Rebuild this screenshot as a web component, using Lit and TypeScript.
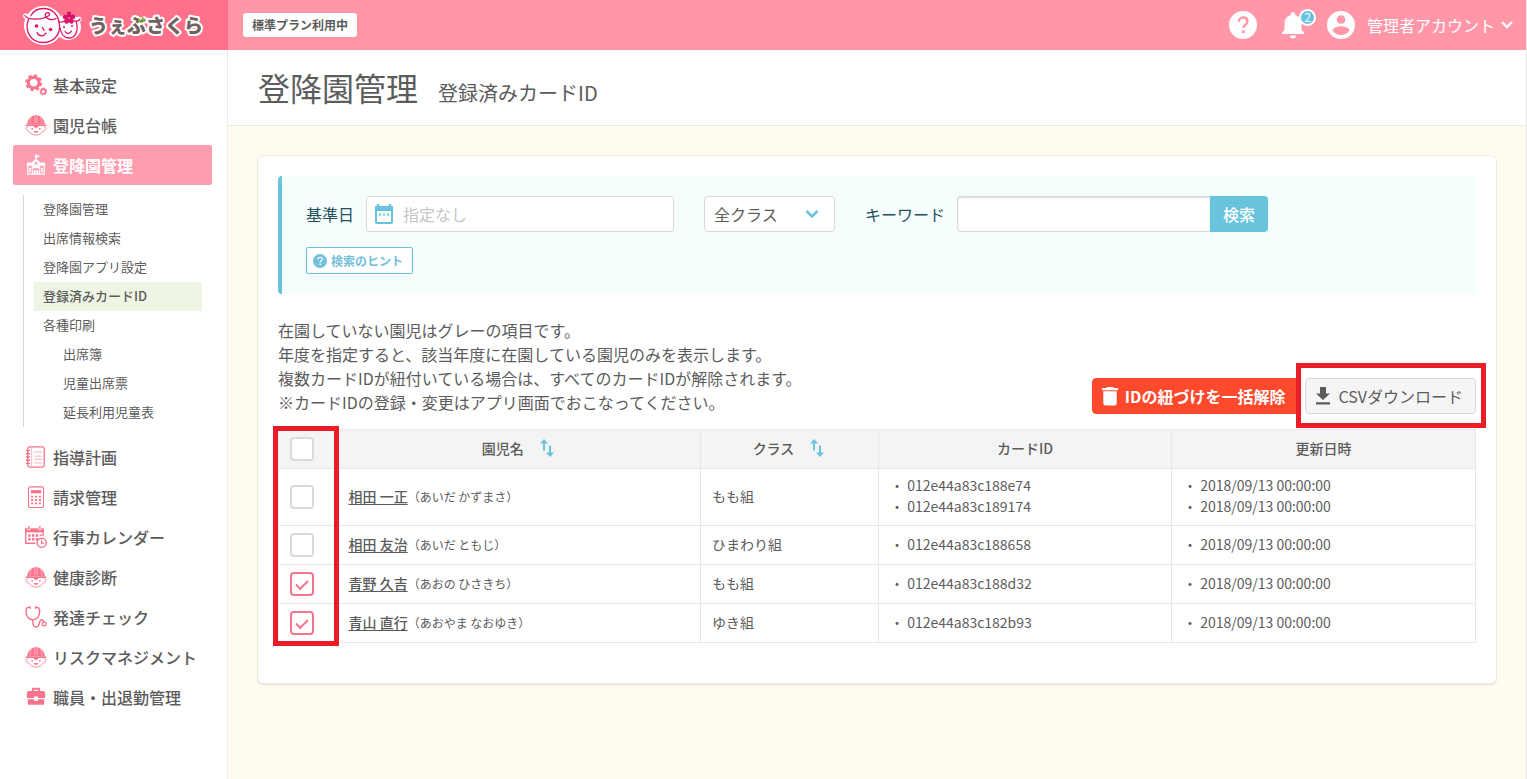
import { LitElement, html, svg, css, nothing } from "lit";
import { customElement, state } from "lit/decorators.js";
import { classMap } from "lit/directives/class-map.js";

const childIcon = svg`
  <path d="M2.300 11.500C2.500 6 6.500 1.300 12 1c5.500.3 9.500 5 9.700 10.500z" fill="currentColor"/>
  <path d="M1.300 12.200h21.400" stroke="currentColor" stroke-width="1.600" stroke-linecap="round"/>
  <path d="M10.800 1v9M13.200 1v9M7.500 3C5.800 5.500 5.500 8 5.500 10.500M16.500 3c1.700 2.500 2 5 2 7.500" fill="none" stroke="#fff" stroke-width=".5"/>
  <path d="M3.300 14C.4 13.600.6 18 3.800 18.200 5.500 21.300 8.500 23 12 23s6.500-1.700 8.200-4.800c3.200-.2 3.400-4.600.5-4.200" fill="none" stroke="currentColor" stroke-width=".9"/>
  <path d="M8.500 13h7L12 15.600z" fill="currentColor"/>
  <circle cx="7.800" cy="16.200" r="1" fill="currentColor"/><circle cx="16.200" cy="16.200" r="1" fill="currentColor"/>
  <path d="M9.500 18.500h5c-.3 2.700-4.700 2.700-5 0z" fill="currentColor"/>`;

const helpShape = svg`
  <circle cx="12" cy="12" r="12" fill="currentColor"/>
  <path d="M8.300 9.300c0-2.200 1.600-3.700 3.800-3.700s3.700 1.400 3.700 3.300c0 2.700-3.500 2.800-3.500 5.700" fill="none" stroke="var(--glyph)" stroke-width="2"/>
  <rect x="11.100" y="16.600" width="2.400" height="2.400" fill="var(--glyph)"/>`;

const icons = {
  gears: svg`
    <g fill="none" stroke="currentColor">
      <circle cx="9.500" cy="9.500" r="5.800" stroke-width="3.400"/>
      <circle cx="9.500" cy="9.500" r="8" stroke-width="2.400" stroke-dasharray="3.600 2.683"/>
      <circle cx="20" cy="19" r="2.500" stroke-width="1.700"/>
      <circle cx="20" cy="19" r="3.600" stroke-width="1.200" stroke-dasharray="1.500 1.327"/>
    </g>`,
  child: childIcon,
  school: svg`
    <path d="M11.600 .5v6M12 1l3.500 1.500L12 4z" fill="currentColor" stroke="currentColor"/>
    <path d="M12 5l6 5.500v2H6v-2z" fill="currentColor"/>
    <path d="M2.500 9.300h4.500v3.500H1.500zM17 9.300h4.500l1 3.500H17z" fill="currentColor"/>
    <path d="M2.900 12.500v9.500h18.200v-9.500M8 12v9.500M16 12v9.500" fill="none" stroke="currentColor" stroke-width="1.300"/>
    <circle cx="12" cy="10" r="1.500" fill="#ff9db0"/>
    <path d="M4.300 15h2.400v4.500H4.300zM17.300 15h2.400v4.500h-2.400zM9.500 17.500h5V22h-5z" fill="currentColor"/>
    <path d="M8.500 12.500h7v3h-7z" fill="currentColor"/>
    <path d="M4 17.200h16M12 17.500v4.500" stroke="#ff9db0" stroke-width=".7"/>`,
  notebook: svg`
    <g fill="none" stroke="currentColor">
      <rect x="3" y="1" width="18" height="22" rx="2" stroke-width="1.400"/>
      <path d="M7.300 1.500v21M10 6.500h8.500M10 11h8.500M10 14.500h8.500M10 18.500h8.500" stroke-width=".6"/>
      <path d="M1 5h4.500M1 8.500h4.500M1 12h4.500M1 15.500h4.500M1 19h4.500" stroke-width="1.500"/>
    </g>`,
  calculator: svg`
    <rect x="3.800" y="1" width="16.400" height="22.500" rx="2" fill="none" stroke="currentColor" stroke-width="1.200"/>
    <path d="M6.500 4.500h11v3.500h-11z" fill="currentColor"/>
    <path d="M7.800 10.500v9.500M12 10.500v9.500M16.200 10.500v9.500" stroke="currentColor" stroke-width="2.300" stroke-dasharray="2.100 1.600"/>`,
  calendarClock: svg`
    <path d="M0 2.500h20.500V7H0z" fill="currentColor"/>
    <path d="M4.300 0v4.500M16.200 0v4.500" stroke="#fff" stroke-width="3"/>
    <path d="M4.300 0v3.800M16.200 0v3.800M.8 5v13.800h10.500" fill="none" stroke="currentColor" stroke-width="1.500"/>
    <path d="M19.700 6v5" stroke="currentColor" stroke-width="1.500"/>
    <path d="M4.800 9v7M8.900 9v7M13 9v7" stroke="currentColor" stroke-width="2.600" stroke-dasharray="2.700 1.400"/>
    <path d="M17 9v2" stroke="currentColor" stroke-width="2"/>
    <circle cx="18.300" cy="18.300" r="5" fill="#fff" stroke="currentColor" stroke-width="1.500"/>
    <path d="M18 15v3.600h3" fill="none" stroke="currentColor" stroke-width="1.300"/>`,
  stethoscope: svg`
    <g fill="none" stroke="currentColor" stroke-width="1.600" stroke-linecap="round">
      <path d="M5 1.600C2 1 1 3 1.200 6c.3 5.500 3 9 7.400 9S15.600 11.500 16 6c.2-3-1-5-4-4.400"/>
      <path d="M8.600 15c-.6 5 1 8 3.800 8 4.300 0 2.300-8 5.600-8 2 0 2 1.500 2.500 2.500"/>
      <circle cx="21" cy="19.500" r="2.200" stroke-width="1.400"/>
      <path d="M5.500 .9v1.600M11.500 .9v1.600"/>
    </g>`,
  briefcase: svg`
    <path d="M8.500 6V3h7v3" fill="none" stroke="currentColor" stroke-width="2" stroke-linejoin="round"/>
    <path d="M4 5.500h16a2 2 0 0 1 2 2V13h-8v-1.500h-4V13H2V7.500a2 2 0 0 1 2-2zM3 14.500h7V16h4v-1.500h7v4.500a1.500 1.500 0 0 1-1.500 1.500h-15A1.500 1.500 0 0 1 3 19z" fill="currentColor"/>`,
};

type IconName = keyof typeof icons;
interface SubItem { label: string; nested?: boolean; current?: boolean }
interface MenuItem { label: string; icon: IconName; children?: SubItem[] }

const menu: MenuItem[] = [
  { label: "基本設定", icon: "gears" },
  { label: "園児台帳", icon: "child" },
  {
    label: "登降園管理",
    icon: "school",
    children: [
      { label: "登降園管理" },
      { label: "出席情報検索" },
      { label: "登降園アプリ設定" },
      { label: "登録済みカードID", current: true },
      { label: "各種印刷" },
      { label: "出席簿", nested: true },
      { label: "児童出席票", nested: true },
      { label: "延長利用児童表", nested: true },
    ],
  },
  { label: "指導計画", icon: "notebook" },
  { label: "請求管理", icon: "calculator" },
  { label: "行事カレンダー", icon: "calendarClock" },
  { label: "健康診断", icon: "child" },
  { label: "発達チェック", icon: "stethoscope" },
  { label: "リスクマネジメント", icon: "child" },
  { label: "職員・出退勤管理", icon: "briefcase" },
];

interface Child {
  name: string;
  kana: string;
  group: string;
  cards: string[];
  checked: boolean;
}

const updatedAt = "2018/09/13 00:00:00";

@customElement("app-root")
export class AppRoot extends LitElement {
  @state() private roster: Child[] = [
    { name: "相田 一正", kana: "（あいだ かずまさ）", group: "もも組", cards: ["012e44a83c188e74", "012e44a83c189174"], checked: false },
    { name: "相田 友治", kana: "（あいだ ともじ）", group: "ひまわり組", cards: ["012e44a83c188658"], checked: false },
    { name: "青野 久吉", kana: "（あおの ひさきち）", group: "もも組", cards: ["012e44a83c188d32"], checked: true },
    { name: "青山 直行", kana: "（あおやま なおゆき）", group: "ゆき組", cards: ["012e44a83c182b93"], checked: true },
  ];

  static styles = css`
    :host {
      display: flex;
      flex-direction: column;
      min-height: 100vh;
      box-sizing: border-box;
      border-right: 1px solid #e6e6e6;
      font-family: "Noto Sans CJK JP", "Noto Sans", sans-serif;
      font-size: 16px;
      line-height: 24px;
      color: #5c5c5c;
      background: #fff;
    }
    * { box-sizing: border-box; }
    a { color: inherit; text-decoration: none; }
    ul, h1, p { margin: 0; padding: 0; list-style: none; }
    button, input, select { font: inherit; color: inherit; margin: 0; }
    button { cursor: pointer; }
    svg { display: block; flex: none; }

    .topbar { display: flex; height: 50px; background: #ff97a9; color: #fff; }
    .brand { width: 228px; flex: none; background: #ff718a; }
    .brand-text {
      font-size: 19px;
      font-weight: 900;
      fill: #71625f;
      stroke: #fff;
      stroke-width: 4px;
      stroke-linejoin: round;
      paint-order: stroke;
    }
    .topbar-body { display: flex; flex: 1; align-items: center; justify-content: space-between; padding: 0 12px 0 15px; }
    .plan { padding: 0 9px; border-radius: 3px; background: #fff; color: #5c5c5c; font-size: 12px; font-weight: 700; }
    .tools { display: flex; align-items: center; }
    .icon-button { display: block; position: relative; padding: 0; border: 0; background: none; color: #fff; }
    .help { --glyph: #ff97a9; margin-right: 24px; }
    .bell { margin-right: 22px; }
    .badge {
      position: absolute;
      top: -2px;
      left: 18px;
      width: 17px;
      height: 17px;
      border: 2px solid #fff;
      border-radius: 50%;
      background: #63c2dd;
      font-size: 12px;
      line-height: 12px;
    }
    .account { display: flex; align-items: center; gap: 5px; padding: 0; border: 0; background: none; color: #fff; }
    .account-name { padding-left: 7px; }

    .page { display: flex; flex: 1; }
    .sidebar { width: 228px; flex: none; padding: 15px 15px 0 13px; border-right: 1px solid #ececec; }
    .menu-link { display: flex; align-items: center; gap: 6px; height: 40px; padding-left: 12px; border-radius: 2px; font-weight: 500; }
    .menu-link svg { color: #f9748b; }
    .menu-link.active, .menu-link.active svg { color: #fff; }
    .menu-link.active { background: #ff9db0; font-weight: 700; }
    .submenu { margin: 10px; padding: 0 0 0 10px; border-left: 1px solid #d5d5d5; font-size: 13px; line-height: 27px; }
    .submenu a { display: block; padding: 0 0 2px 9px; }
    .submenu .nested { padding-left: 29px; }
    .submenu .current { background: #eff5e5; font-weight: 500; }

    .main { flex: 1; min-width: 0; background: #fffbee; }
    .page-head { display: flex; align-items: baseline; gap: 20px; height: 76px; padding: 13px 30px 0; border-bottom: 1px solid #ebe9e2; background: #fff; }
    h1 { font-size: 32px; line-height: 48px; font-weight: 400; }
    .subtitle { font-size: 20px; }
    .card { margin: 29px; padding: 20px 20px 40px; border: 1px solid #eeebe0; border-radius: 6px; background: #fff; box-shadow: 0 1px 1px #e4e1d6; }

    .search { display: flex; flex-direction: column; align-items: flex-start; gap: 15px; padding: 20px 24px; border-left: 4px solid #68c3dd; border-radius: 4px 0 0 4px; background: #f6fdfd; }
    .search-row { display: flex; align-items: center; gap: 30px; }
    .field { display: flex; align-items: center; gap: 12px; color: #24505c; }
    .control { display: flex; align-items: center; height: 36px; border: 1px solid #d8d8d8; border-radius: 4px; background: #fff; color: #5c5c5c; }
    .date { width: 308px; padding-left: 6px; color: #68c3dd; }
    .date input { flex: 1; min-width: 0; border: 0; padding: 0 8px; outline: 0; background: none; color: #5c5c5c; }
    .date input::placeholder { color: #c6c6c6; }
    .select { position: relative; width: 131px; }
    .select select { appearance: none; width: 100%; height: 100%; padding: 0 9px; border: 0; background: none; }
    .select svg { position: absolute; right: 14px; color: #68c3dd; pointer-events: none; }
    .keyword { display: flex; }
    .keyword .control { width: 253px; padding: 0 8px; border-right: 0; border-radius: 4px 0 0 4px; box-shadow: inset 0 1px 2px #ddd; }
    .go { width: 58px; height: 36px; padding: 0; border: 0; border-radius: 0 4px 4px 0; background: #68c3dd; color: #fff; font-weight: 500; }
    .hint { --glyph: #fff; display: flex; align-items: center; gap: 4px; height: 27px; padding: 0 9px 0 6px; border: 1px solid #68c3dd; border-radius: 2px; background: #fff; color: #75c0da; font-size: 12px; font-weight: 700; }

    .notes { display: flex; align-items: flex-end; justify-content: space-between; margin: 24px 0 15px; }
    .actions { display: flex; gap: 4px; }
    .action { display: flex; align-items: center; gap: 7px; height: 36px; padding: 0 12px 0 9px; border: 1px solid #d6d6d6; border-radius: 4px; background: #f5f5f5; white-space: nowrap; }
    .danger { padding: 0 15px 0 9px; border-color: #ff492d; background: #ff492d; color: #fff; font-weight: 700; }
    .marked { position: relative; }
    .marker { position: absolute; border: 5px solid #ea1c25; pointer-events: none; }
    .marker-download { inset: -15px -10px -14px -9px; }
    .marker-checks { left: -5px; top: -3px; bottom: -3px; width: 66px; }

    table { width: 100%; table-layout: fixed; border-collapse: collapse; font-size: 14px; line-height: 21px; border: 1px solid #e8e8e8; }
    .col-check { width: 59px; }
    .col-group { width: 178px; }
    .col-card { width: 293px; }
    .col-date { width: 304px; }
    th, td { padding: 6px 11px 8px; border: 1px solid #e8e8e8; text-align: left; }
    th { background: #f4f4f4; font-weight: 500; text-align: center; }
    .check-cell { padding: 7px 11px; border-right-color: transparent; border-right-style: hidden; }
    .sortable { display: flex; align-items: center; justify-content: center; gap: 14px; }
    .sort { padding: 0; border: 0; background: none; color: #68c3dd; }
    input[type="checkbox"] { appearance: none; display: grid; place-items: center; width: 24px; height: 24px; border: 2px solid #dadada; border-radius: 4px; background: #fff; }
    input[type="checkbox"]:checked { border-color: #f2768d; }
    input[type="checkbox"]:checked::after { content: ""; width: 10px; height: 5px; margin-bottom: 2px; border: solid #f2768d; border-width: 0 0 2px 2px; transform: rotate(-45deg); }
    .name { font-weight: 500; text-decoration: underline; text-underline-offset: 2px; }
    .kana { font-size: 12px; }
  `;

  private toggle(index: number, checked: boolean) {
    this.roster = this.roster.map((c, i) => (i === index || index < 0 ? { ...c, checked } : c));
  }

  private renderBrand() {
    return html`
      <a class="brand" href="#" aria-label="うぇぶさくら">
        <svg width="228" height="50" viewBox="0 0 228 50">
          <g stroke="#fff" stroke-width="5" fill="#fff" stroke-linejoin="round" stroke-linecap="round">
            <circle cx="43.500" cy="25.500" r="17"/><circle cx="68" cy="27" r="10.500"/>
            <path d="M25.500 16c4 5 15 5 20 0M76 20l3-1M69 15l1 5" fill="none"/>
          </g>
          <g fill="none" stroke="#dd1467" stroke-width="1.300" stroke-linecap="round">
            <path d="M28.500 19.500C24 31 31 42.500 43 42.500c11 0 17.500-8 16.500-18C58.500 14.500 52 8.500 43.500 8.500c-6 0-10.500 3-12.500 7"/>
            <path d="M25 15.500c3 5 16 4.500 22.500 1 4.500-2.500 0-6-2-2.500-1.500 4 5.500 7.500 10.500 4.500"/>
            <path d="M58.500 21.500c3 1.500 6 0 8-2.500M60 28c1 6 4.500 10 9 10 6.500 0 9.500-7 7.500-15.500M74 20.500c2 1.500 5 .5 6-1.500"/>
            <path d="M37 32.500c1.500 4 7 4.500 9 .5M42.500 27.500l1.500 3M65 31.500c2 3 5 2.500 6.500-.5"/>
          </g>
          <g fill="#dd1467">
            <circle cx="36.500" cy="26" r="1.800"/><circle cx="50.500" cy="29.500" r="1.800"/>
            <circle cx="64" cy="27" r="1"/><circle cx="72" cy="26" r="1"/>
            <ellipse cx="69" cy="14.500" rx="2.400" ry="3"/>
            <ellipse cx="69" cy="14.500" rx="2.400" ry="3" transform="rotate(72 69 18)"/>
            <ellipse cx="69" cy="14.500" rx="2.400" ry="3" transform="rotate(144 69 18)"/>
            <ellipse cx="69" cy="14.500" rx="2.400" ry="3" transform="rotate(216 69 18)"/>
            <ellipse cx="69" cy="14.500" rx="2.400" ry="3" transform="rotate(288 69 18)"/>
          </g>
          <text class="brand-text" x="89" y="33">うぇぶさくら</text>
          <path d="M139 19.500l1.500 2.500M142.500 18l1.500 2.500" stroke="#76b82a" stroke-width="2" stroke-linecap="round"/>
        </svg>
      </a>`;
  }

  private renderTopbar() {
    return html`
      <header class="topbar">
        ${this.renderBrand()}
        <div class="topbar-body">
          <span class="plan">標準プラン利用中</span>
          <div class="tools">
            <button class="icon-button help" aria-label="ヘルプ">
              <svg width="28" height="28" viewBox="0 0 24 24">${helpShape}</svg>
            </button>
            <button class="icon-button bell" aria-label="お知らせ">
              <svg width="24" height="28" viewBox="0 0 24 28">
                <path d="M12 1a2.200 2.200 0 0 0-2.200 2.200v.7C6 5 3.500 8 3.500 12.500V19L1 21.500V23h22v-1.500L20.500 19v-6.500C20.500 8 18 5 14.200 3.900v-.7A2.200 2.200 0 0 0 12 1zM9 24.500a3 3 0 0 0 6 0z" fill="currentColor"/>
              </svg>
              <span class="badge">2</span>
            </button>
            <button class="account">
              <svg width="28" height="28" viewBox="0 0 24 24">
                <path fill-rule="evenodd" fill="currentColor" d="M12 0a12 12 0 1 0 0 24 12 12 0 0 0 0-24zm0 3.600a3.700 3.700 0 1 1 0 7.400 3.700 3.700 0 0 1 0-7.400zm0 17a8.600 8.600 0 0 1-7.200-3.800c0-2.400 4.800-3.700 7.200-3.700s7.200 1.300 7.200 3.700A8.600 8.600 0 0 1 12 20.600z"/>
              </svg>
              <span class="account-name">管理者アカウント</span>
              <svg width="14" height="10" viewBox="0 0 14 10"><path d="M2 2l5 5 5-5" fill="none" stroke="currentColor" stroke-width="2.400"/></svg>
            </button>
          </div>
        </div>
      </header>`;
  }

  private renderSidebar() {
    return html`
      <nav class="sidebar">
        <ul>
          ${menu.map(
            (item) => html`<li>
              <a href="#" class=${classMap({ "menu-link": true, active: !!item.children })}>
                <svg width="22" height="22" viewBox="0 0 24 24" fill="none">${icons[item.icon]}</svg>${item.label}
              </a>
              ${item.children
                ? html`<ul class="submenu">
                    ${item.children.map(
                      (sub) => html`<li><a href="#" class=${classMap({ nested: !!sub.nested, current: !!sub.current })}>${sub.label}</a></li>`
                    )}
                  </ul>`
                : nothing}
            </li>`
          )}
        </ul>
      </nav>`;
  }

  private renderSearch() {
    return html`
      <form class="search" @submit=${(e: Event) => e.preventDefault()}>
        <div class="search-row">
          <div class="field">
            <label for="date">基準日</label>
            <div class="control date">
              <svg width="22" height="22" viewBox="0 0 22 22">
                <path d="M5 1v3M17 1v3" stroke="currentColor" stroke-width="2.400"/>
                <rect x="3" y="4" width="16" height="16" rx="1" fill="none" stroke="currentColor" stroke-width="2"/>
                <path d="M2 3h18v5H2z" fill="currentColor"/>
                <path d="M6 11.500h10" stroke="currentColor" stroke-width="2" stroke-dasharray="2 2"/>
              </svg>
              <input id="date" type="text" placeholder="指定なし" />
            </div>
          </div>
          <div class="control select">
            <select aria-label="クラス">
              <option>全クラス</option><option>もも組</option><option>ひまわり組</option><option>ゆき組</option>
            </select>
            <svg width="16" height="12" viewBox="0 0 16 12"><path d="M2.500 3L8 8.500 13.500 3" fill="none" stroke="currentColor" stroke-width="2.600"/></svg>
          </div>
          <div class="field">
            <label for="keyword">キーワード</label>
            <div class="keyword">
              <input id="keyword" class="control" type="text" />
              <button class="go">検索</button>
            </div>
          </div>
        </div>
        <button class="hint" type="button">
          <svg width="14" height="14" viewBox="0 0 24 24">${helpShape}</svg>検索のヒント
        </button>
      </form>`;
  }

  private renderSortHeader(label: string) {
    return html`<th>
      <div class="sortable">
        ${label}
        <button class="sort" aria-label="${label}で並べ替え">
          <svg width="18" height="20" viewBox="0 0 18 20">
            <path d="M6 12.500V3M12 7.500V17" stroke="currentColor" stroke-width="2"/>
            <path d="M2 5.500L6 1l4 4.500zM8 14.500l4 4.500 4-4.500z" fill="currentColor"/>
          </svg>
        </button>
      </div>
    </th>`;
  }

  private renderTable() {
    return html`
      <table>
        <colgroup>
          <col class="col-check" /><col /><col class="col-group" /><col class="col-card" /><col class="col-date" />
        </colgroup>
        <thead>
          <tr>
            <th class="check-cell">
              <input type="checkbox" aria-label="すべて選択" @change=${(e: Event) => this.toggle(-1, (e.target as HTMLInputElement).checked)} />
            </th>
            ${this.renderSortHeader("園児名")}
            ${this.renderSortHeader("クラス")}
            <th>カードID</th>
            <th>更新日時</th>
          </tr>
        </thead>
        <tbody>
          ${this.roster.map(
            (c, i) => html`<tr>
              <td class="check-cell">
                <input type="checkbox" aria-label=${c.name} .checked=${c.checked} @change=${(e: Event) => this.toggle(i, (e.target as HTMLInputElement).checked)} />
              </td>
              <td><a class="name" href="#">${c.name}</a><span class="kana">${c.kana}</span></td>
              <td>${c.group}</td>
              <td>${c.cards.map((id) => html`<div>・ ${id}</div>`)}</td>
              <td>${c.cards.map(() => html`<div>・ ${updatedAt}</div>`)}</td>
            </tr>`
          )}
        </tbody>
      </table>`;
  }

  render() {
    return html`
      ${this.renderTopbar()}
      <div class="page">
        ${this.renderSidebar()}
        <main class="main">
          <div class="page-head">
            <h1>登降園管理</h1>
            <span class="subtitle">登録済みカードID</span>
          </div>
          <section class="card">
            ${this.renderSearch()}
            <div class="notes">
              <p>
                在園していない園児はグレーの項目です。<br />
                年度を指定すると、該当年度に在園している園児のみを表示します。<br />
                複数カードIDが紐付いている場合は、すべてのカードIDが解除されます。<br />
                ※カードIDの登録・変更はアプリ画面でおこなってください。
              </p>
              <div class="actions">
                <button class="action danger">
                  <svg width="16" height="20" viewBox="0 0 16 20"><path d="M5 1h6l1 1h4v2.300H0V2h4zM1.300 5.300h13.400V17a2.500 2.500 0 0 1-2.500 2.500H3.800A2.500 2.500 0 0 1 1.300 17z" fill="currentColor"/></svg>
                  IDの紐づけを一括解除
                </button>
                <div class="marked">
                  <button class="action">
                    <svg width="16" height="18" viewBox="0 0 16 18"><path d="M5 0h6v6.500h4L8 13 1 6.500h4zM1 15.300h14v2.200H1z" fill="currentColor"/></svg>
                    CSVダウンロード
                  </button>
                  <div class="marker marker-download"></div>
                </div>
              </div>
            </div>
            <div class="marked">
              ${this.renderTable()}
              <div class="marker marker-checks"></div>
            </div>
          </section>
        </main>
      </div>`;
  }
}
